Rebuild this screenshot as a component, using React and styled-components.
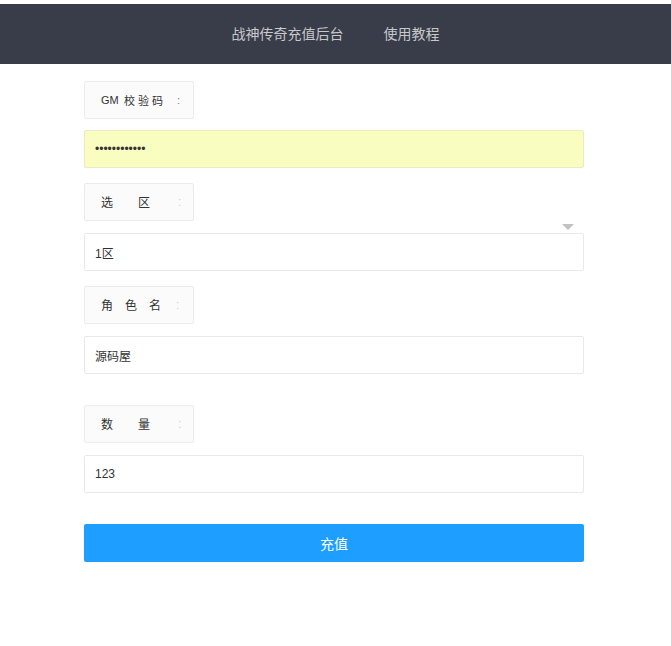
import React from "react";
import styled, { createGlobalStyle } from "styled-components";

const GlobalStyle = createGlobalStyle`
  html, body {
    margin: 0;
    padding: 0;
    background: #fff;
  }
  body {
    font-family: "Liberation Sans", "Noto Sans CJK SC", sans-serif;
    color: #333;
  }
`;

const Page = styled.div`
  padding-top: 4px;
  min-height: 642px;
`;

const Header = styled.header`
  box-sizing: border-box;
  height: 60px;
  padding-bottom: 3px;
  background: #393d49;
  display: flex;
  justify-content: center;
  align-items: center;
`;

const NavItem = styled.a`
  padding: 0 20px;
  font-size: 14px;
  color: rgba(255, 255, 255, 0.72);
  text-decoration: none;
  font-family: "Noto Sans CJK SC", sans-serif;
`;

const Form = styled.form`
  width: 500px;
  margin-left: 84px;
  padding-top: 17px;
`;

const Label = styled.div`
  box-sizing: border-box;
  width: 110px;
  height: 38px;
  margin-top: ${(p) => p.$top || 0}px;
  padding: 0 0 1px 16px;
  display: flex;
  align-items: center;
  background: #fbfbfb;
  border: 1px solid #ebebeb;
  border-radius: 2px;
  font-size: ${(p) => p.$size || 12}px;
  color: #333;
  font-family: "Liberation Sans", "Noto Sans CJK SC", sans-serif;
`;

const Char = styled.span`
  display: inline-block;
  width: ${(p) => p.$w}px;
  white-space: nowrap;
`;

const Colon = styled.span`
  color: ${(p) => (p.$dark ? "#777" : "#cfcfcf")};
`;

const InputBox = styled.div`
  position: relative;
  margin-top: ${(p) => p.$top || 12}px;
`;

const Input = styled.input`
  box-sizing: border-box;
  width: 100%;
  height: 38px;
  padding: 0 10px;
  border: 1px solid ${(p) => (p.$filled ? "#eceac4" : "#e9e9e9")};
  border-radius: 2px;
  background: ${(p) => (p.$filled ? "#fafdc0" : "#fff")};
  font-size: 12px;
  color: #333;
  outline: none;
  font-family: "Liberation Sans", "Noto Sans CJK SC", sans-serif;
`;

const Arrow = styled.i`
  position: absolute;
  right: 10px;
  top: -9px;
  width: 0;
  height: 0;
  border-left: 6px solid transparent;
  border-right: 6px solid transparent;
  border-top: 6px solid #c2c2c2;
`;

const Button = styled.button`
  display: block;
  width: 100%;
  height: 38px;
  margin-top: 31px;
  border: none;
  border-radius: 2px;
  background: #1e9fff;
  color: #fff;
  font-size: 14px;
  font-family: "Noto Sans CJK SC", sans-serif;
  cursor: pointer;
`;

const labels = {
  gm: [["GM", 23], ["校", 14], ["验", 14], ["码", 25]],
  area: [["选", 37], ["区", 40]],
  role: [["角", 24], ["色", 24], ["名", 27]],
  num: [["数", 37], ["量", 40]],
};

const FieldLabel = ({ parts, top, dark, size }) => (
  <Label $top={top} $size={size}>
    {parts.map(([t, w]) => (
      <Char key={t} $w={w}>
        {t}
      </Char>
    ))}
    <Colon $dark={dark}>:</Colon>
  </Label>
);

export default function App() {
  return (
    <Page>
      <GlobalStyle />
      <Header>
        <NavItem href="#">战神传奇充值后台</NavItem>
        <NavItem href="#">使用教程</NavItem>
      </Header>
      <Form onSubmit={(e) => e.preventDefault()}>
        <FieldLabel parts={labels.gm} size={11} dark />
        <InputBox $top={11}>
          <Input type="password" $filled defaultValue="123456789012" />
        </InputBox>

        <FieldLabel parts={labels.area} top={15} />
        <InputBox>
          <Input defaultValue="1区" readOnly />
          <Arrow />
        </InputBox>

        <FieldLabel parts={labels.role} top={15} />
        <InputBox>
          <Input defaultValue="源码屋" />
        </InputBox>

        <FieldLabel parts={labels.num} top={31} />
        <InputBox>
          <Input defaultValue="123" />
        </InputBox>

        <Button type="submit">充值</Button>
      </Form>
    </Page>
  );
}
